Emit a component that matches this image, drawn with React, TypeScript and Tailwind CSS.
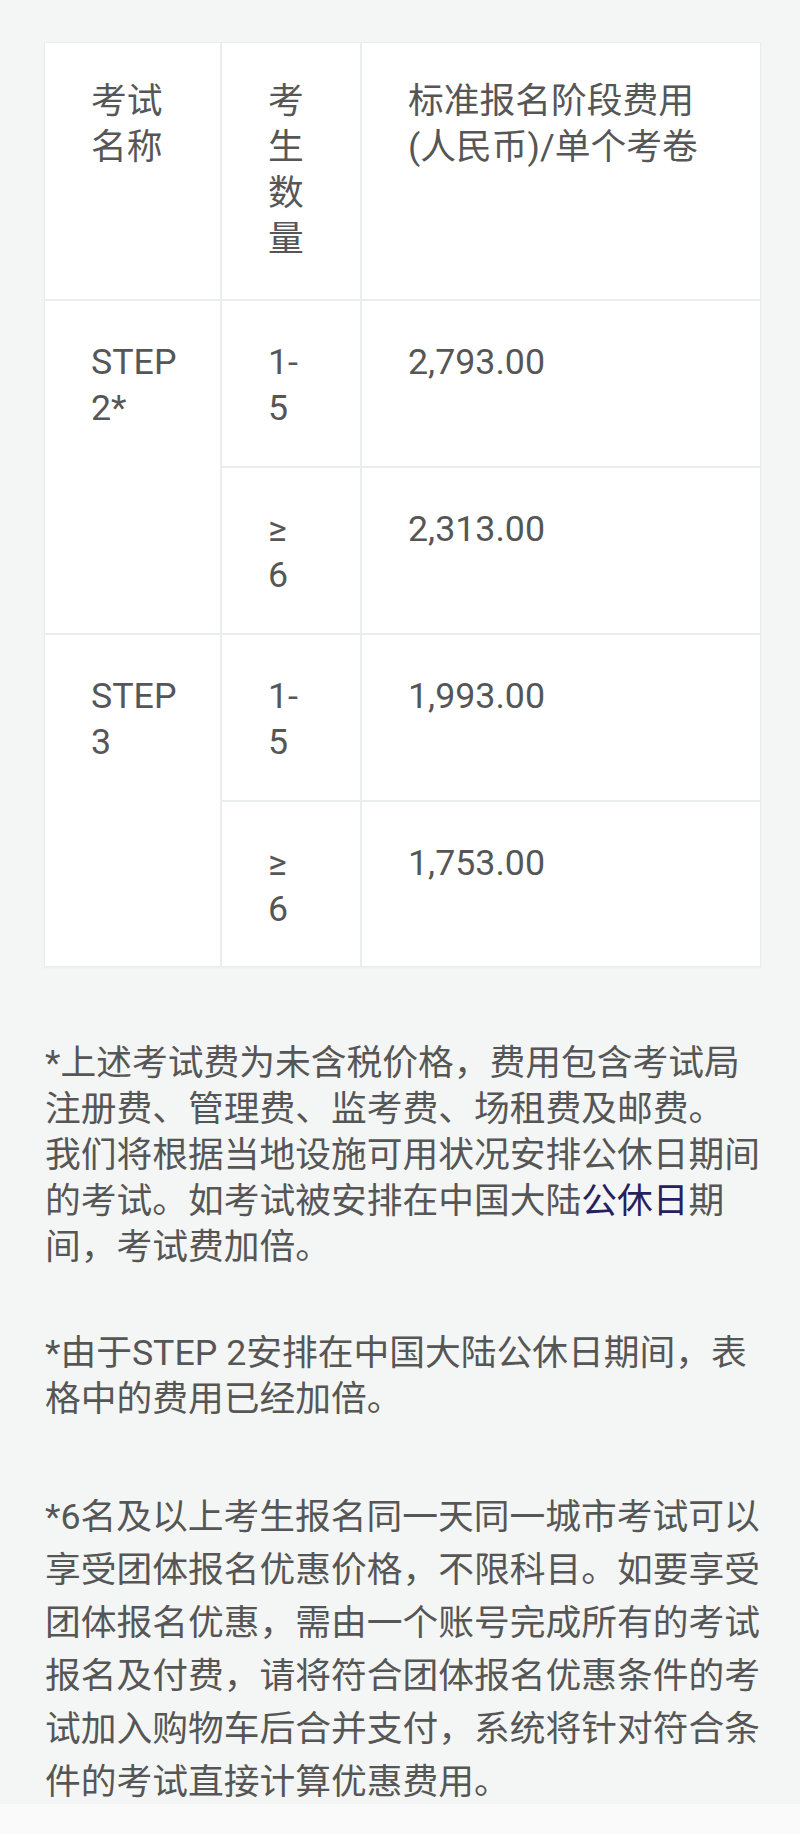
import React from "react";

const font = { fontFamily: 'Roboto, "Noto Sans CJK SC", "Noto Sans", sans-serif' };

function Lines({ lines }: { lines: React.ReactNode[] }) {
  return (
    <>
      {lines.map((l, i) => (
        <div key={i} className="whitespace-nowrap">
          {l}
        </div>
      ))}
    </>
  );
}

export default function App() {
  const head = "bg-white pl-[46px] pt-[35px]";
  const cell = "bg-white pl-[46px] pt-[38px]";
  return (
    <div
      className="w-[800px] min-h-[1834px] bg-[#f4f6f5] text-[#565656] text-[35.75px] flex flex-col"
      style={font}
    >
      <div className="h-[1804px] pt-[42px] pl-[44px] pr-[39px]">
        <div className="grid grid-cols-[175px_138px_398px] grid-rows-[256px_165px_165px_165px_164px] gap-[2px] bg-[#eaeded] p-[1px] leading-[46px] shadow-[0_1px_2px_rgba(0,0,0,0.04)]">
          <div className={head}>
            <Lines lines={["考试", "名称"]} />
          </div>
          <div className={head}>
            <Lines lines={["考", "生", "数", "量"]} />
          </div>
          <div className={head}>
            <Lines lines={["标准报名阶段费用", "(人民币)/单个考卷"]} />
          </div>

          <div className={`${cell} row-span-2`}>
            <Lines lines={["STEP", "2*"]} />
          </div>
          <div className={cell}>
            <Lines lines={["1-", "5"]} />
          </div>
          <div className={cell}>2,793.00</div>
          <div className={cell}>
            <Lines lines={["≥", "6"]} />
          </div>
          <div className={cell}>2,313.00</div>

          <div className={`${cell} row-span-2`}>
            <Lines lines={["STEP", "3"]} />
          </div>
          <div className={cell}>
            <Lines lines={["1-", "5"]} />
          </div>
          <div className={cell}>1,993.00</div>
          <div className={cell}>
            <Lines lines={["≥", "6"]} />
          </div>
          <div className={cell}>1,753.00</div>
        </div>

        <div className="mt-[73px] pl-[1px] leading-[46px]">
          <Lines
            lines={[
              "*上述考试费为未含税价格，费用包含考试局",
              "注册费、管理费、监考费、场租费及邮费。",
              "我们将根据当地设施可用状况安排公休日期间",
              <>
                的考试。如考试被安排在中国大陆
                <span className="text-[#27205e]">公休日</span>期
              </>,
              "间，考试费加倍。",
            ]}
          />
        </div>

        <div className="mt-[60px] pl-[1px] leading-[46px]">
          <Lines
            lines={["*由于STEP 2安排在中国大陆公休日期间，表", "格中的费用已经加倍。"]}
          />
        </div>

        <div className="mt-[69px] pl-[1px] leading-[53px]">
          <Lines
            lines={[
              "*6名及以上考生报名同一天同一城市考试可以",
              "享受团体报名优惠价格，不限科目。如要享受",
              "团体报名优惠，需由一个账号完成所有的考试",
              "报名及付费，请将符合团体报名优惠条件的考",
              "试加入购物车后合并支付，系统将针对符合条",
              "件的考试直接计算优惠费用。",
            ]}
          />
        </div>
      </div>
      <div className="h-[30px] bg-[#f9faf9]" />
    </div>
  );
}
